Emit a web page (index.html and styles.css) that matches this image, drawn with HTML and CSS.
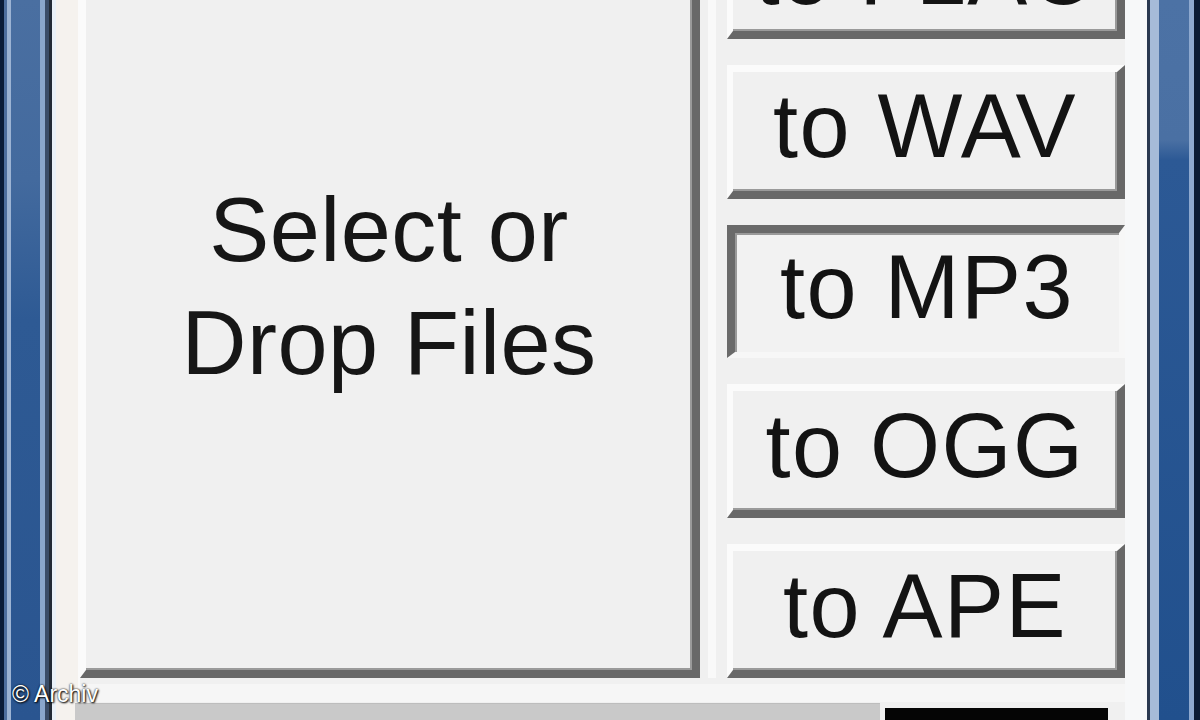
FILE: index.html
```html
<!DOCTYPE html>
<html lang="en">
<head>
<meta charset="utf-8">
<title>Audio Converter</title>
<link rel="stylesheet" href="styles.css">
</head>
<body>
<div class="window">
  <div class="frame frame-left"></div>
  <div class="client">
    <div class="main">
      <div class="drop-panel"><span class="drop-text">Select or<br>Drop Files</span></div>
      <div class="divider"></div>
      <div class="buttons">
        <div class="btn btn-first">to FLAC</div>
        <div class="btn">to WAV</div>
        <div class="btn btn-pressed">to MP3</div>
        <div class="btn">to OGG</div>
        <div class="btn">to APE</div>
      </div>
    </div>
    <div class="status">
      <div class="progress"></div>
      <div class="counter"></div>
    </div>
  </div>
  <div class="frame frame-right"></div>
  <div class="watermark">© Archiv</div>
</div>
</body>
</html>
```

FILE: styles.css
```css
html, body {
  margin: 0;
  padding: 0;
  width: 1200px;
  height: 720px;
  overflow: hidden;
  background: #f0f0f0;
  font-family: "Liberation Sans", Arial, sans-serif;
}

.window {
  position: relative;
  display: flex;
  width: 1200px;
  height: 720px;
  overflow: hidden;
}

.frame {
  flex: none;
  height: 720px;
}

.frame-left {
  width: 52px;
  background:
    linear-gradient(to right,
      #0a1c38 0, #0a1c38 4px,
      #4d6e9e 4px, #4d6e9e 7px,
      #9cb3d3 7px, #9cb3d3 11px,
      transparent 11px, transparent 40px,
      #8aa6cc 40px, #8aa6cc 45px,
      #3a4c68 45px, #3a4c68 49px,
      #222a36 49px, #222a36 52px),
    linear-gradient(to bottom, #4a6fa1 0, #436a9e 180px, #2e5a94 320px, #2a5590 720px);
}

.frame-right {
  width: 53px;
  background:
    linear-gradient(to right,
      #2a3850 0, #2a3850 3px,
      #a6bbd8 3px, #a6bbd8 12px,
      transparent 12px, transparent 42px,
      #8ea9cf 42px, #8ea9cf 47px,
      #0b1b34 47px, #0b1b34 53px),
    linear-gradient(to bottom, #4c72a5 0, #4a70a3 140px, #2c5995 160px, #21508d 720px);
}

.client {
  flex: 1;
  display: flex;
  flex-direction: column;
  padding: 0 22px 0 28px;
  background:
    linear-gradient(to right,
      #eaf1f8 0, #eaf1f8 4px,
      #f5f2ee 4px, #f5f2ee 26px,
      #fafafa 26px, #fafafa 28px,
      #f0f0f0 28px, #f0f0f0 calc(100% - 22px),
      #f7f8f9 calc(100% - 22px));
}

.main {
  display: flex;
  height: 773px;
  margin-top: -95px;
  flex: none;
}

.drop-panel {
  box-sizing: border-box;
  width: 620px;
  height: 100%;
  border-style: solid;
  border-width: 7px 8px 8px 6px;
  border-color: #fbfbfb #686868 #686868 #fbfbfb;
  box-shadow: inset -2px -2px 0 #9a9a9a;
  background: #f0f0f0;
  text-align: center;
  padding-top: 262px;
}

.drop-text {
  display: inline-block;
  font-size: 90px;
  line-height: 113px;
  letter-spacing: 0.5px;
  color: #161616;
}

.divider {
  flex: none;
  width: 27px;
  background: linear-gradient(to right,
    transparent 0, transparent 8px,
    #f9f9f9 8px, #f9f9f9 16px,
    transparent 16px);
}

.buttons {
  flex: none;
  width: 398px;
  display: grid;
  grid-template-rows: repeat(5, 1fr);
  gap: 26px;
}

.btn {
  box-sizing: border-box;
  min-height: 0;
  display: flex;
  align-items: center;
  justify-content: center;
  border-style: solid;
  border-width: 7px 8px 8px 6px;
  border-color: #fbfbfb #686868 #686868 #fbfbfb;
  box-shadow: inset -2px -2px 0 #9a9a9a;
  background: #f0f0f0;
  font-size: 90px;
  line-height: 100px;
  letter-spacing: 1.5px;
  color: #131313;
  padding-bottom: 10px;
  white-space: nowrap;
  overflow: hidden;
}

.btn-first {
  padding-bottom: 0;
  padding-top: 4px;
}

.btn-pressed {
  border-color: #6a6a6a #f7f7f7 #f7f7f7 #6a6a6a;
  border-width: 8px 6px 6px 8px;
  box-shadow: inset 2px 2px 0 #9a9a9a;
  background: #f2f2f2;
}

.status {
  flex: none;
  display: flex;
  align-items: flex-start;
  height: 42px;
  background: linear-gradient(to bottom, #f0f0f0 0, #f0f0f0 6px, #f6f6f6 6px, #f6f6f6 24px, #f0f0f0 24px);
}

.progress {
  margin-left: -5px;
  margin-top: 25px;
  width: 805px;
  height: 20px;
  background: #c9c9c9;
  border-top: 1px solid #bdbdbd;
}

.counter {
  margin-left: 5px;
  margin-top: 30px;
  width: 223px;
  height: 20px;
  background: #050505;
}

.watermark {
  position: absolute;
  left: 12px;
  top: 681px;
  font-size: 23px;
  color: #ffffff;
  text-shadow: 1px 1px 2px #000, 0 0 2px #000;
}
```
